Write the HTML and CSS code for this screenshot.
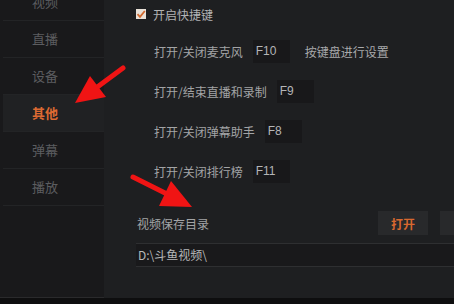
FILE: index.html
```html
<!DOCTYPE html>
<html lang="zh-CN">
<head>
    <meta charset="UTF-8">
    <title>设置 - 其他</title>
    <link rel="stylesheet" href="styles.css">
</head>
<body>
    <div class="window">
        <div class="sidebar">
            <ul class="nav">
                <li class="nav-item">视频</li>
                <li class="nav-item">直播</li>
                <li class="nav-item">设备</li>
                <li class="nav-item active">其他</li>
                <li class="nav-item">弹幕</li>
                <li class="nav-item">播放</li>
            </ul>
        </div>

        <div class="main">
            <label class="check-row">
                <span class="checkbox">
                    <svg width="10" height="10" viewBox="0 0 10 10">
                        <path d="M1.5 5.2 L4 7.8 L8.8 2" fill="none" stroke="#d2692e" stroke-width="1.8"/>
                    </svg>
                </span>
                开启快捷键
            </label>

            <div class="hotkeys">
                <div class="hotkey-row">
                    <span class="hotkey-label">打开/关闭麦克风</span>
                    <span class="key-box">F10</span>
                    <span class="hint">按键盘进行设置</span>
                </div>
                <div class="hotkey-row">
                    <span class="hotkey-label">打开/结束直播和录制</span>
                    <span class="key-box">F9</span>
                </div>
                <div class="hotkey-row">
                    <span class="hotkey-label">打开/关闭弹幕助手</span>
                    <span class="key-box">F8</span>
                </div>
                <div class="hotkey-row">
                    <span class="hotkey-label">打开/关闭排行榜</span>
                    <span class="key-box">F11</span>
                </div>
            </div>

            <div class="save-row">
                <span class="save-label">视频保存目录</span>
                <button class="btn">打开</button>
                <button class="btn"></button>
            </div>
            <div class="path-box">D:\斗鱼视频\</div>
        </div>
    </div>
    <div class="bottom-strip"></div>

    <!-- red arrows drawn over the screenshot -->
    <svg class="arrows" width="454" height="304" viewBox="0 0 454 304">
        <line x1="123" y1="68" x2="96" y2="88" stroke="#f01414" stroke-width="5" stroke-linecap="round"/>
        <polygon points="75,103 90,76 106,97" fill="#f01414"/>
        <line x1="133" y1="177" x2="167" y2="194" stroke="#f01414" stroke-width="5" stroke-linecap="round"/>
        <polygon points="192,207 171,181 159,206" fill="#f01414"/>
    </svg>
</body>
</html>
```

FILE: styles.css
```css
body {
    margin: 0;
    width: 454px;
    height: 304px;
    overflow: hidden;
    background-color: #0f0f10;
    font-family: "Noto Sans CJK SC", "Liberation Sans", sans-serif;
    position: relative;
}

.window {
    display: flex;
    height: 298px;
    background-color: #1e1f21;
}

.bottom-strip {
    height: 6px;
    background-color: #0e0e0f;
}

/* sidebar */
.sidebar {
    width: 104px;
    flex-shrink: 0;
    background-color: #19191b;
    overflow: hidden;
    border-bottom: 1px solid #2a2a2c;
    box-sizing: border-box;
}

.nav {
    list-style: none;
    margin: -16px 0 0 3px;
    padding: 0;
}

.nav-item {
    height: 36px;
    line-height: 36px;
    padding-left: 29px;
    font-size: 13px;
    color: #5c5d60;
    border-bottom: 1px solid #232426;
}

.nav-item.active {
    background-color: #202123;
    color: #dd6a32;
    font-weight: bold;
}

/* main panel */
.main {
    flex: 1;
    padding-left: 32px;
    color: #a3a4a6;
    font-size: 12px;
}

.check-row {
    display: flex;
    align-items: center;
    gap: 7px;
    margin-top: 6px;
    height: 16px;
    color: #b2b3b5;
}

.checkbox {
    width: 10px;
    height: 10px;
    background-color: #e9e1d8;
    display: flex;
    align-items: center;
    justify-content: center;
}

.hotkeys {
    display: flex;
    flex-direction: column;
    gap: 17px;
    margin-top: 18px;
    padding-left: 18px;
}

.hotkey-row {
    display: flex;
    align-items: center;
    height: 23px;
}

.hotkey-label {
    margin-right: 10px;
}

.key-box {
    width: 37px;
    height: 23px;
    line-height: 23px;
    padding-left: 3px;
    box-sizing: border-box;
    background-color: #18181a;
    font-family: "Liberation Sans", sans-serif;
    color: #b4b5b7;
}

.hint {
    margin-left: 15px;
    color: #a8a9ab;
}

.save-row {
    display: flex;
    align-items: center;
    margin-top: 28px;
    padding-left: 1px;
    height: 24px;
}

.save-label {
    width: 241px;
}

.btn {
    width: 50px;
    height: 24px;
    border: none;
    padding: 0;
    margin-right: 12px;
    flex-shrink: 0;
    background-color: #28292b;
    color: #d8682f;
    font-family: "Noto Sans CJK SC", sans-serif;
    font-size: 12px;
    font-weight: bold;
}

.path-box {
    margin-top: 8px;
    height: 22px;
    line-height: 22px;
    padding-left: 2px;
    background-color: #19191b;
    border-top: 1px solid #2e2f31;
    border-bottom: 1px solid #2e2f31;
    color: #b6b7b9;
}

.arrows {
    position: absolute;
    left: 0;
    top: 0;
    pointer-events: none;
}
```
